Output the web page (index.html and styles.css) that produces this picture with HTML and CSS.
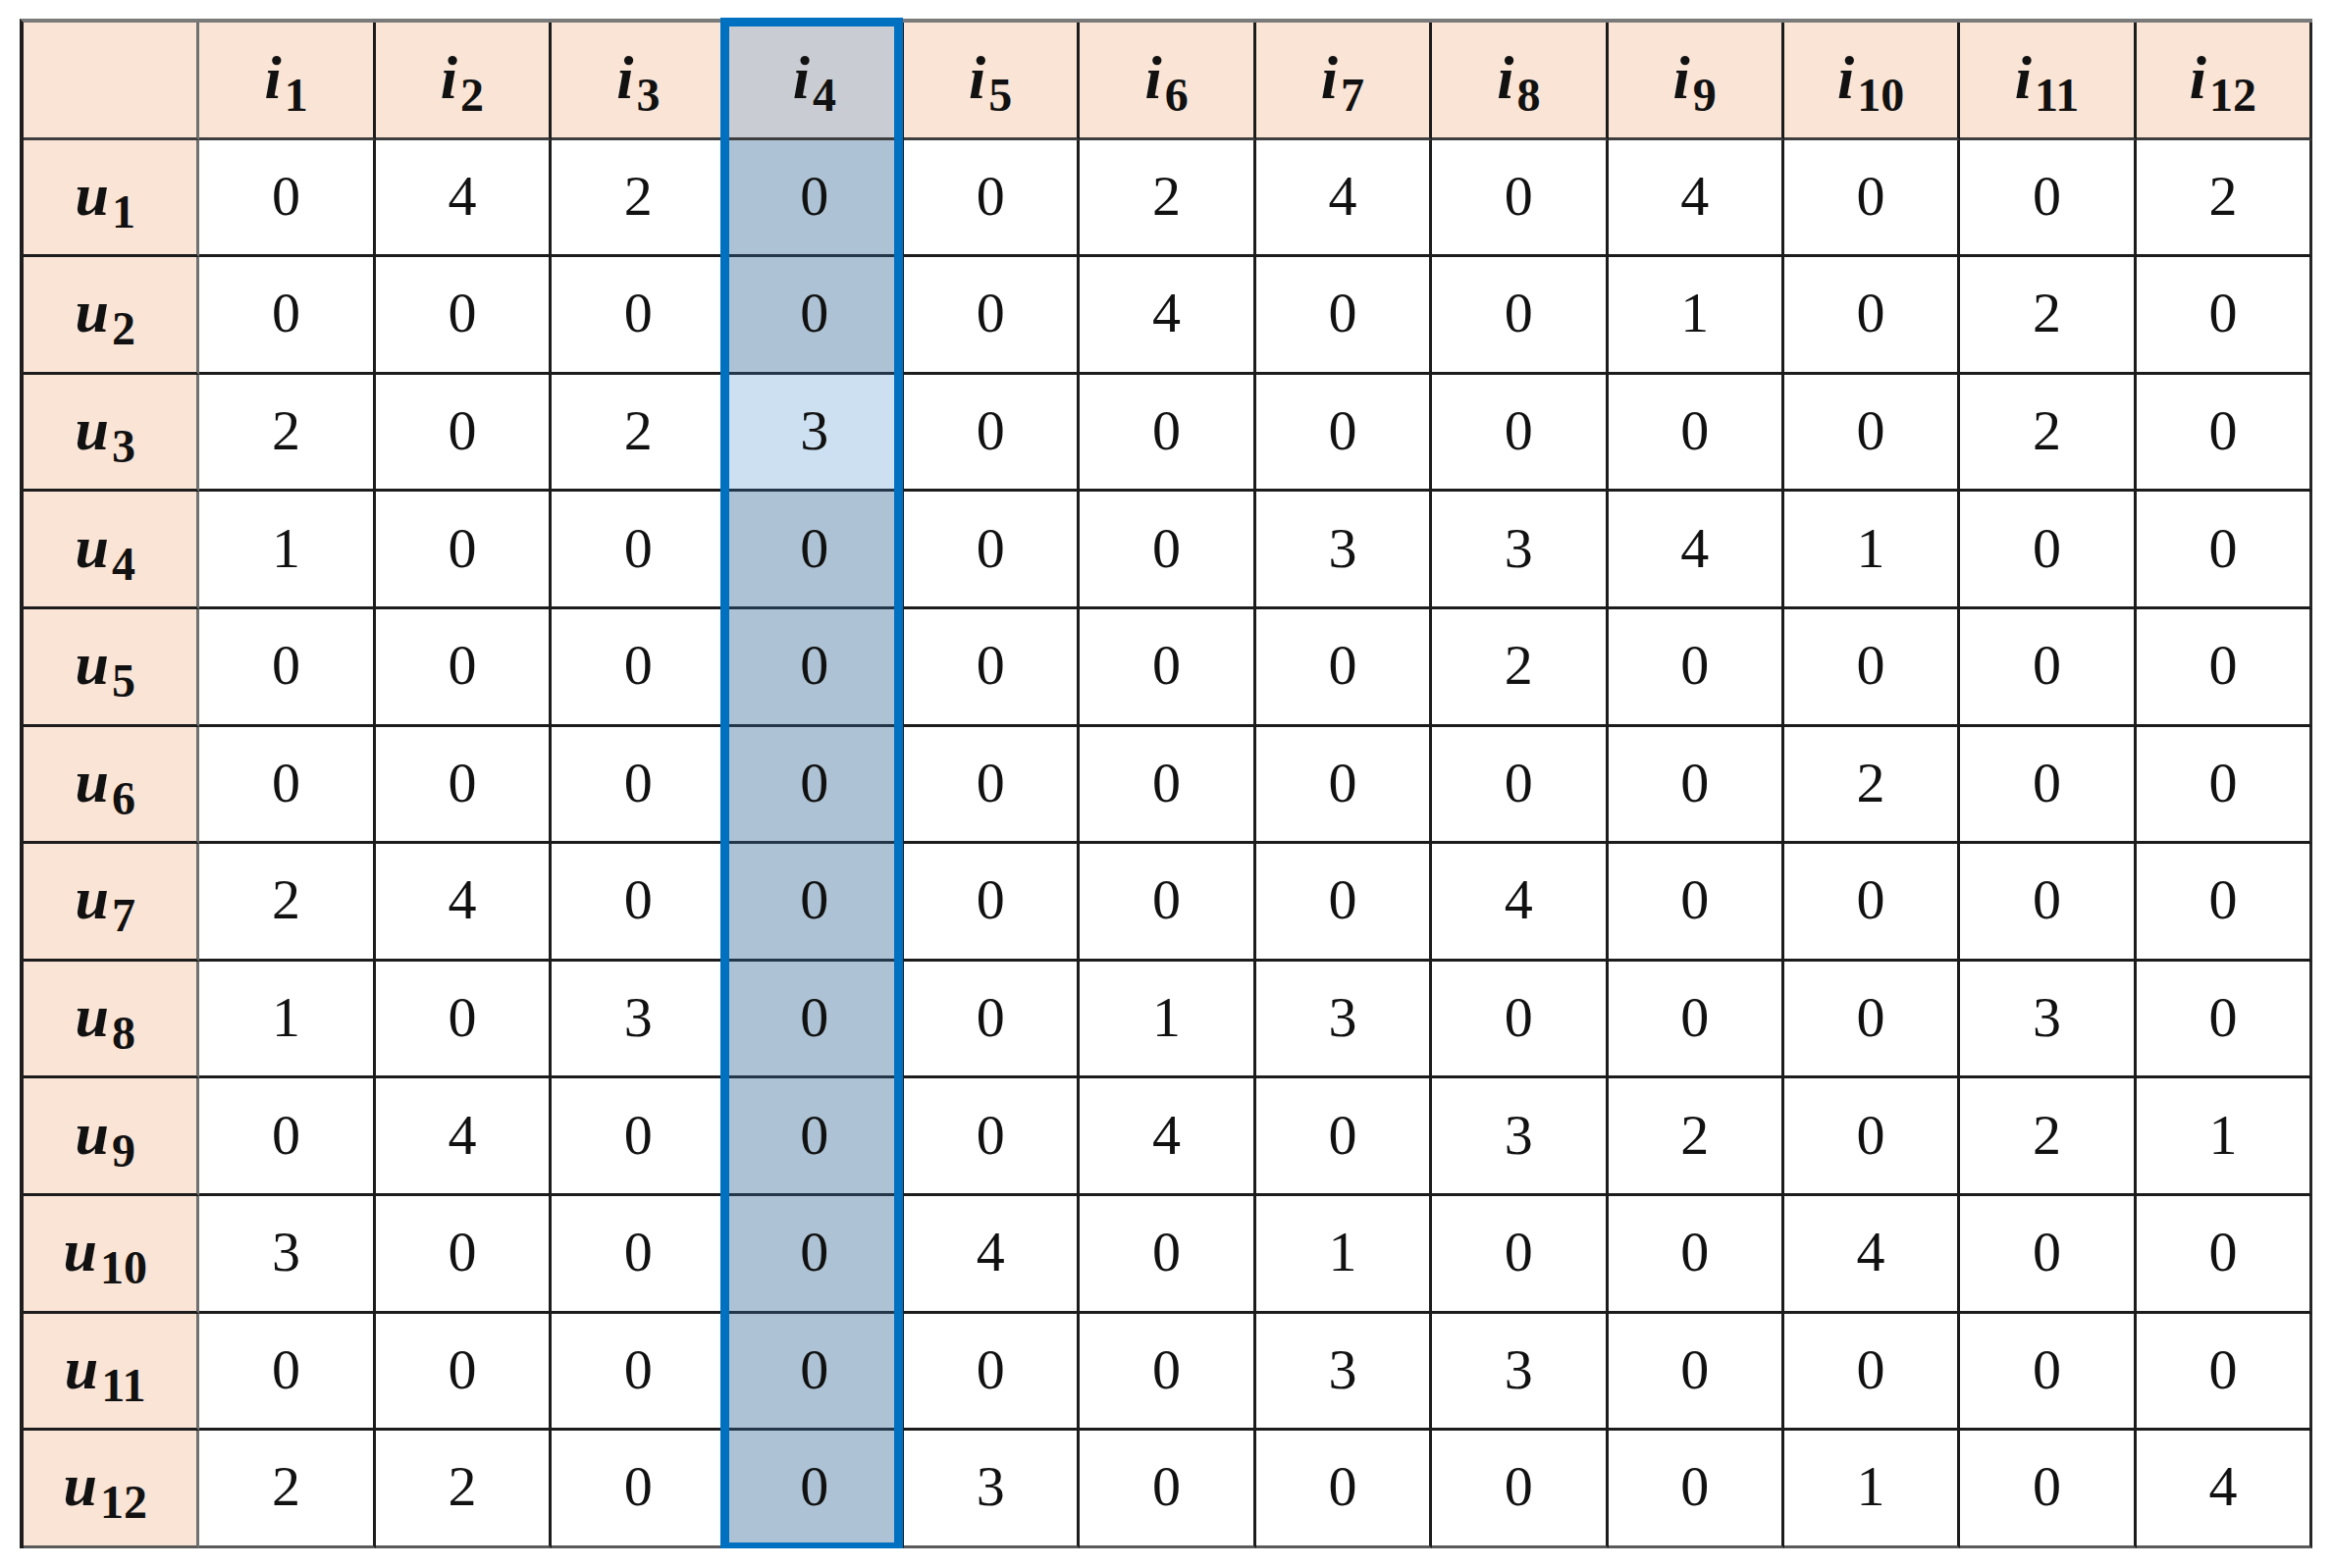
FILE: index.html
```html
<!DOCTYPE html>
<html>
<head>
<meta charset="utf-8">
<link rel="stylesheet" href="styles.css">
</head>
<body>
<div class="page">
  <div class="matrix">
    <div class="cell corner"></div>
    <div class="cell ch"><span class="lbl"><span class="v">i</span><span class="s">1</span></span></div>
    <div class="cell ch"><span class="lbl"><span class="v">i</span><span class="s">2</span></span></div>
    <div class="cell ch"><span class="lbl"><span class="v">i</span><span class="s">3</span></span></div>
    <div class="cell ch hlh"><span class="lbl"><span class="v">i</span><span class="s">4</span></span></div>
    <div class="cell ch"><span class="lbl"><span class="v">i</span><span class="s">5</span></span></div>
    <div class="cell ch"><span class="lbl"><span class="v">i</span><span class="s">6</span></span></div>
    <div class="cell ch"><span class="lbl"><span class="v">i</span><span class="s">7</span></span></div>
    <div class="cell ch"><span class="lbl"><span class="v">i</span><span class="s">8</span></span></div>
    <div class="cell ch"><span class="lbl"><span class="v">i</span><span class="s">9</span></span></div>
    <div class="cell ch"><span class="lbl"><span class="v">i</span><span class="s">10</span></span></div>
    <div class="cell ch"><span class="lbl"><span class="v">i</span><span class="s">11</span></span></div>
    <div class="cell ch last-col"><span class="lbl"><span class="v">i</span><span class="s">12</span></span></div>

    <div class="cell rh"><span class="lbl"><span class="v">u</span><span class="s">1</span></span></div>
    <div class="cell n">0</div><div class="cell n">4</div><div class="cell n">2</div><div class="cell n hl">0</div><div class="cell n">0</div><div class="cell n">2</div><div class="cell n">4</div><div class="cell n">0</div><div class="cell n">4</div><div class="cell n">0</div><div class="cell n">0</div><div class="cell n last-col">2</div>

    <div class="cell rh"><span class="lbl"><span class="v">u</span><span class="s">2</span></span></div>
    <div class="cell n">0</div><div class="cell n">0</div><div class="cell n">0</div><div class="cell n hl">0</div><div class="cell n">0</div><div class="cell n">4</div><div class="cell n">0</div><div class="cell n">0</div><div class="cell n">1</div><div class="cell n">0</div><div class="cell n">2</div><div class="cell n last-col">0</div>

    <div class="cell rh"><span class="lbl"><span class="v">u</span><span class="s">3</span></span></div>
    <div class="cell n">2</div><div class="cell n">0</div><div class="cell n">2</div><div class="cell n sel">3</div><div class="cell n">0</div><div class="cell n">0</div><div class="cell n">0</div><div class="cell n">0</div><div class="cell n">0</div><div class="cell n">0</div><div class="cell n">2</div><div class="cell n last-col">0</div>

    <div class="cell rh"><span class="lbl"><span class="v">u</span><span class="s">4</span></span></div>
    <div class="cell n">1</div><div class="cell n">0</div><div class="cell n">0</div><div class="cell n hl">0</div><div class="cell n">0</div><div class="cell n">0</div><div class="cell n">3</div><div class="cell n">3</div><div class="cell n">4</div><div class="cell n">1</div><div class="cell n">0</div><div class="cell n last-col">0</div>

    <div class="cell rh"><span class="lbl"><span class="v">u</span><span class="s">5</span></span></div>
    <div class="cell n">0</div><div class="cell n">0</div><div class="cell n">0</div><div class="cell n hl">0</div><div class="cell n">0</div><div class="cell n">0</div><div class="cell n">0</div><div class="cell n">2</div><div class="cell n">0</div><div class="cell n">0</div><div class="cell n">0</div><div class="cell n last-col">0</div>

    <div class="cell rh"><span class="lbl"><span class="v">u</span><span class="s">6</span></span></div>
    <div class="cell n">0</div><div class="cell n">0</div><div class="cell n">0</div><div class="cell n hl">0</div><div class="cell n">0</div><div class="cell n">0</div><div class="cell n">0</div><div class="cell n">0</div><div class="cell n">0</div><div class="cell n">2</div><div class="cell n">0</div><div class="cell n last-col">0</div>

    <div class="cell rh"><span class="lbl"><span class="v">u</span><span class="s">7</span></span></div>
    <div class="cell n">2</div><div class="cell n">4</div><div class="cell n">0</div><div class="cell n hl">0</div><div class="cell n">0</div><div class="cell n">0</div><div class="cell n">0</div><div class="cell n">4</div><div class="cell n">0</div><div class="cell n">0</div><div class="cell n">0</div><div class="cell n last-col">0</div>

    <div class="cell rh"><span class="lbl"><span class="v">u</span><span class="s">8</span></span></div>
    <div class="cell n">1</div><div class="cell n">0</div><div class="cell n">3</div><div class="cell n hl">0</div><div class="cell n">0</div><div class="cell n">1</div><div class="cell n">3</div><div class="cell n">0</div><div class="cell n">0</div><div class="cell n">0</div><div class="cell n">3</div><div class="cell n last-col">0</div>

    <div class="cell rh"><span class="lbl"><span class="v">u</span><span class="s">9</span></span></div>
    <div class="cell n">0</div><div class="cell n">4</div><div class="cell n">0</div><div class="cell n hl">0</div><div class="cell n">0</div><div class="cell n">4</div><div class="cell n">0</div><div class="cell n">3</div><div class="cell n">2</div><div class="cell n">0</div><div class="cell n">2</div><div class="cell n last-col">1</div>

    <div class="cell rh"><span class="lbl"><span class="v">u</span><span class="s">10</span></span></div>
    <div class="cell n">3</div><div class="cell n">0</div><div class="cell n">0</div><div class="cell n hl">0</div><div class="cell n">4</div><div class="cell n">0</div><div class="cell n">1</div><div class="cell n">0</div><div class="cell n">0</div><div class="cell n">4</div><div class="cell n">0</div><div class="cell n last-col">0</div>

    <div class="cell rh"><span class="lbl"><span class="v">u</span><span class="s">11</span></span></div>
    <div class="cell n">0</div><div class="cell n">0</div><div class="cell n">0</div><div class="cell n hl">0</div><div class="cell n">0</div><div class="cell n">0</div><div class="cell n">3</div><div class="cell n">3</div><div class="cell n">0</div><div class="cell n">0</div><div class="cell n">0</div><div class="cell n last-col">0</div>

    <div class="cell rh last-row"><span class="lbl"><span class="v">u</span><span class="s">12</span></span></div>
    <div class="cell n last-row">2</div><div class="cell n last-row">2</div><div class="cell n last-row">0</div><div class="cell n hl last-row">0</div><div class="cell n last-row">3</div><div class="cell n last-row">0</div><div class="cell n last-row">0</div><div class="cell n last-row">0</div><div class="cell n last-row">0</div><div class="cell n last-row">1</div><div class="cell n last-row">0</div><div class="cell n last-row last-col">4</div>

    <div class="highlight"></div>
  </div>
</div>
</body>
</html>
```

FILE: styles.css
```css
html, body {
  margin: 0;
  padding: 0;
  background: #ffffff;
}

.page {
  padding: 19px 0 0 20px;
}

.matrix {
  position: relative;
  display: grid;
  grid-template-columns: repeat(13, 179.4px);
  grid-template-rows: repeat(13, 119.6px);
  width: max-content;
  border-top: 4px solid #7a7a7a;
  border-left: 4px solid #1e1e1e;
  font-family: "Liberation Serif", "Times New Roman", serif;
  color: #111;
}

.cell {
  box-sizing: border-box;
  border-right: 3px solid #1c1c1c;
  border-bottom: 3px solid #1c1c1c;
  display: flex;
  align-items: center;
  justify-content: center;
  background: #ffffff;
}

.n {
  font-size: 58px;
  line-height: 1;
  padding-bottom: 2px;
}

.ch, .rh, .corner {
  background: #f9e4d6;
}

.ch {
  border-bottom-color: #3e3e3e;
  padding-top: 12px;
}

.rh {
  border-right-color: #707070;
  padding-right: 10px;
  padding-top: 10px;
}

.corner {
  border-right-color: #707070;
  border-bottom-color: #3e3e3e;
}

.lbl {
  display: block;
  line-height: 60px;
  white-space: nowrap;
}

.v {
  font-size: 62px;
  font-weight: bold;
  font-style: italic;
}

.s {
  font-size: 48px;
  font-weight: bold;
  vertical-align: -13px;
  line-height: 0;
  margin-left: 3px;
}

.hlh {
  background: #c9cdd3;
}

.hl {
  background: #adc3d5;
  border-bottom-color: #23364a;
}

.sel {
  background: #cce0f1;
  border-bottom-color: #23364a;
}

.last-col {
  border-right-color: #262626;
}

.last-row {
  border-bottom-color: #5a5a5a;
}

.highlight {
  position: absolute;
  left: 710px;
  top: -5px;
  width: 186px;
  height: 1563px;
  box-sizing: border-box;
  border: 9px solid #0070c0;
  pointer-events: none;
}
```
